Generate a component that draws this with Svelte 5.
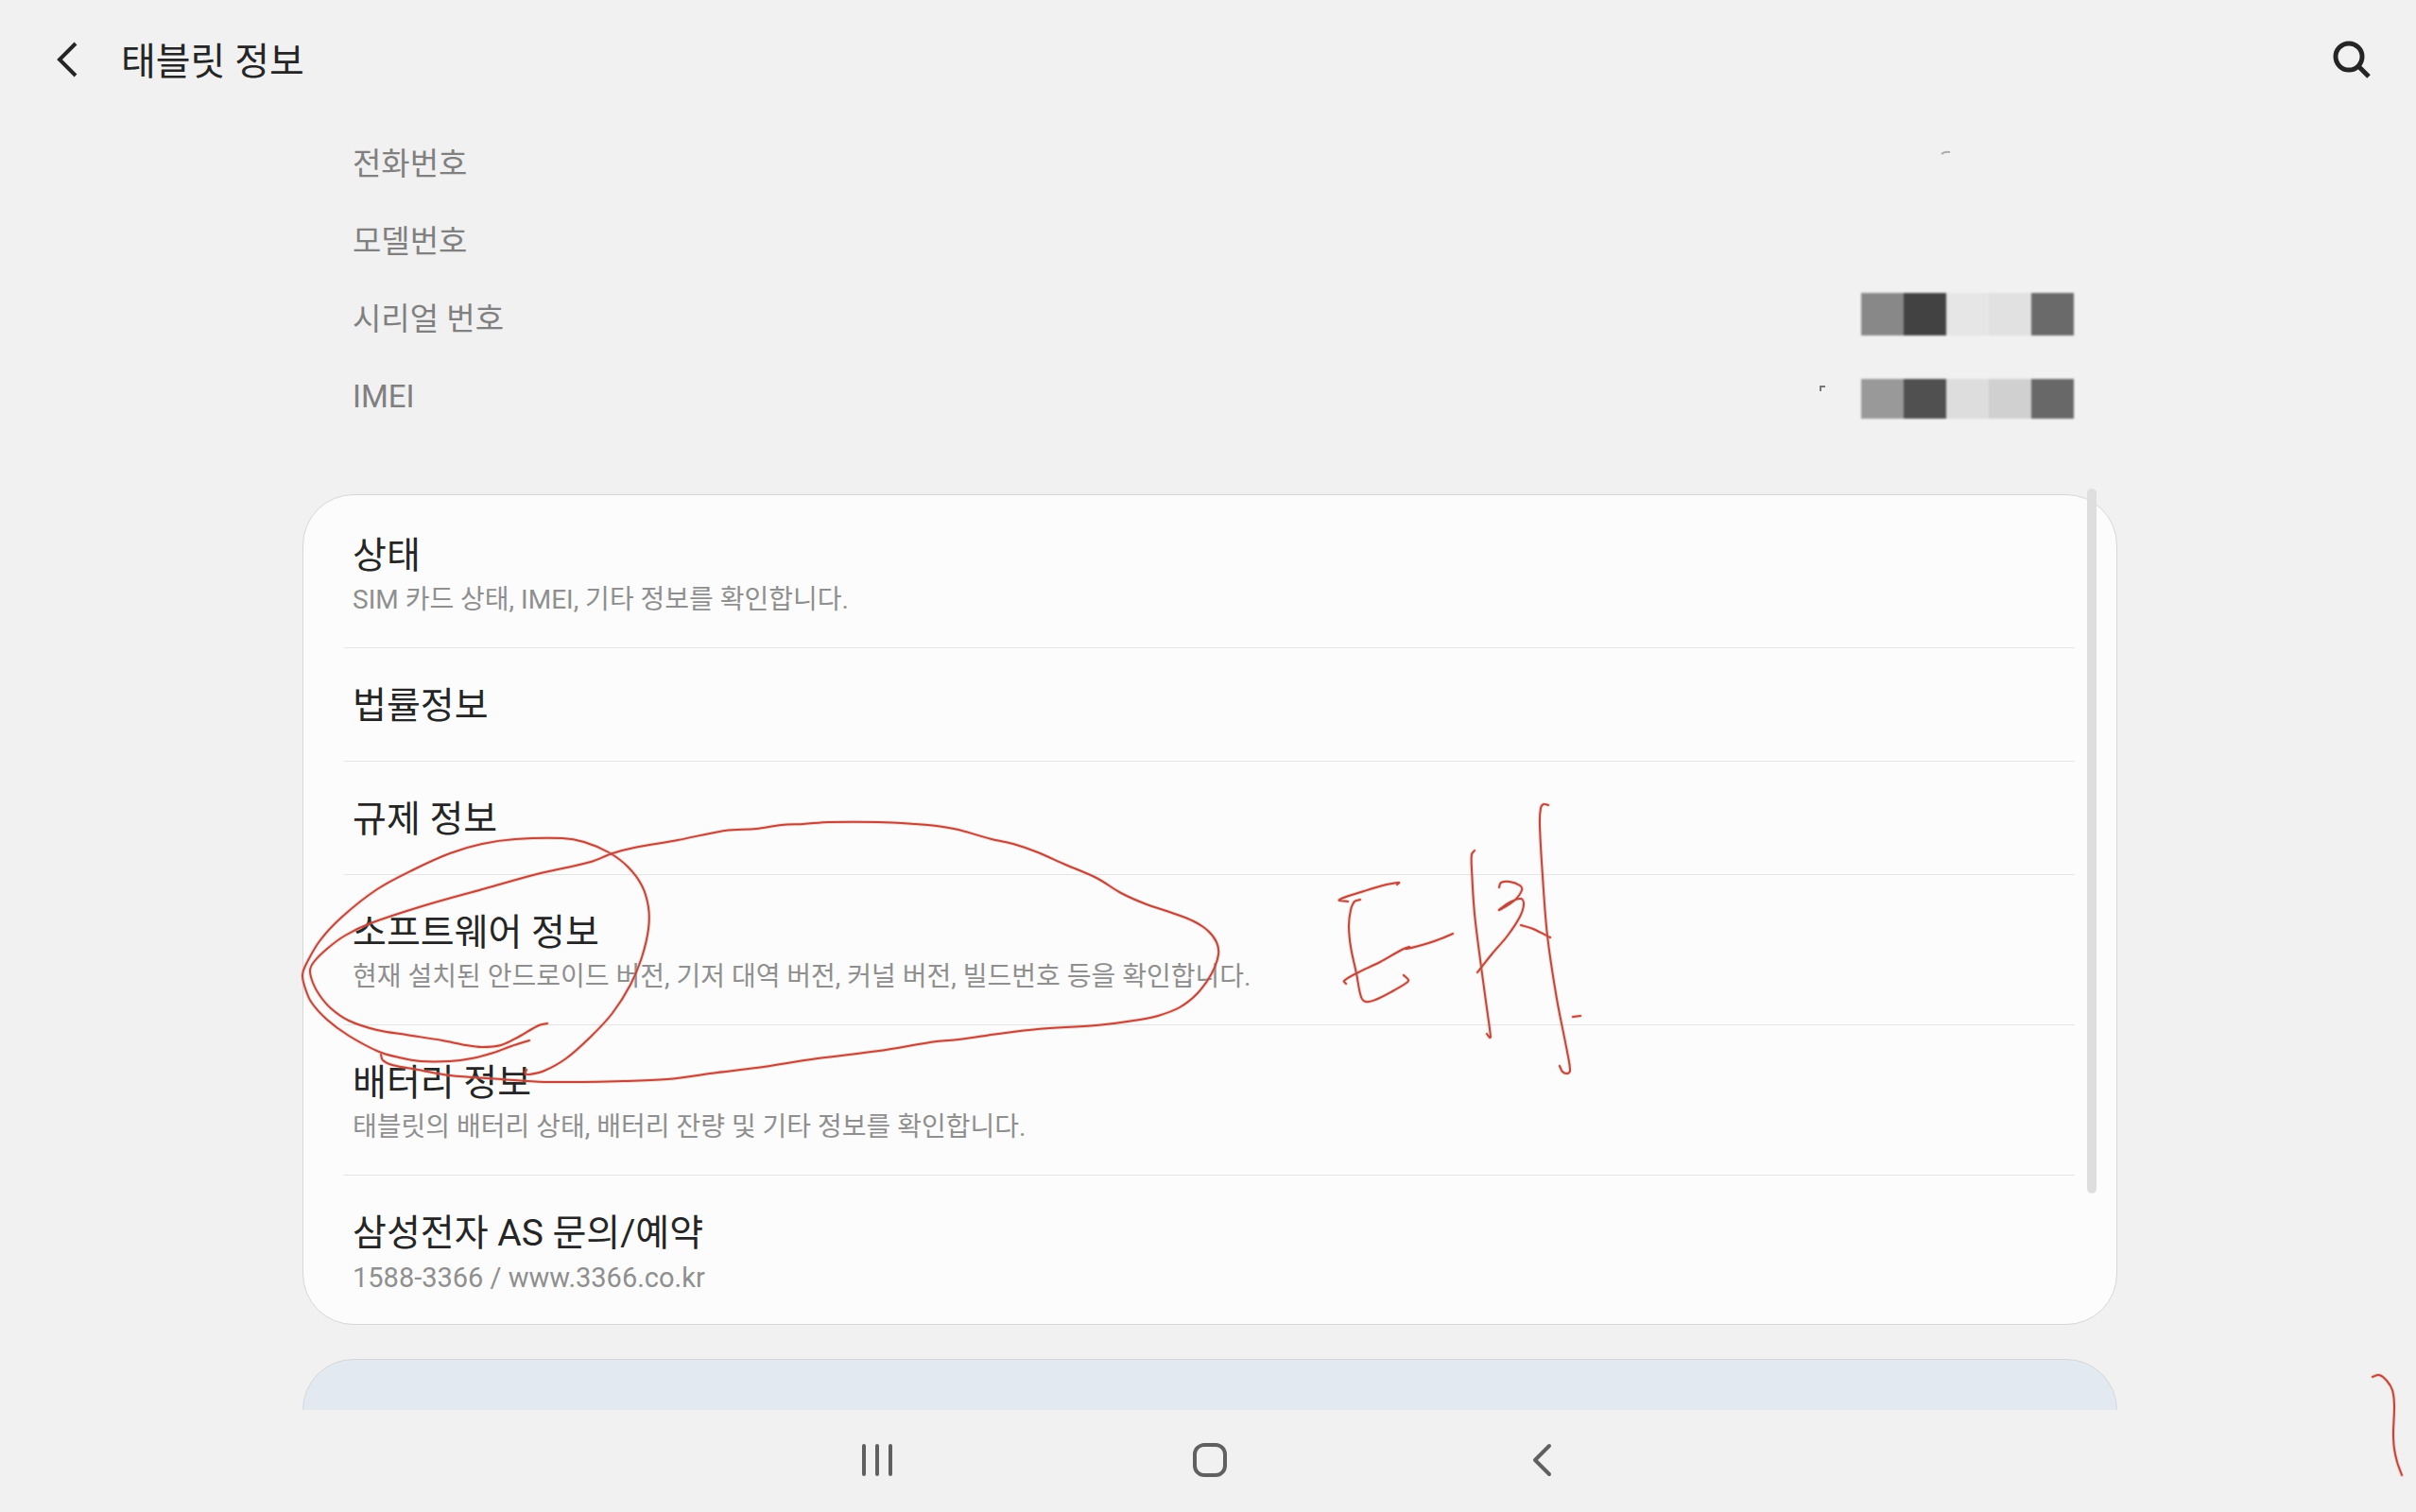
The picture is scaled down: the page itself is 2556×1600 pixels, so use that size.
<script lang="ts">
  type Point = [number, number];

  const deviceInfo = ['전화번호', '모델번호', '시리얼 번호', 'IMEI'];

  const menu = [
    { title: '상태', detail: 'SIM 카드 상태, IMEI, 기타 정보를 확인합니다.' },
    { title: '법률정보' },
    { title: '규제 정보' },
    { title: '소프트웨어 정보', detail: '현재 설치된 안드로이드 버전, 기저 대역 버전, 커널 버전, 빌드번호 등을 확인합니다.' },
    { title: '배터리 정보', detail: '태블릿의 배터리 상태, 배터리 잔량 및 기타 정보를 확인합니다.' },
    { title: '삼성전자 AS 문의/예약', detail: '1588-3366 / www.3366.co.kr', latin: true }
  ];

  const mosaics = [
    { y: 13, h: 45, shades: ['#888888', '#424242', '#e6e6e6', '#e1e1e1', '#6a6a6a'] },
    { y: 104, h: 42, shades: ['#999999', '#505050', '#dddddd', '#d0d0d0', '#686868'] }
  ];

  // Pen strokes drawn over the screen
  const strokes: Point[][] = [
    [[560,1101],[541,1107],[522,1114],[499,1120],[476,1123],[445,1123],[422,1119],[401,1113],[369,1096],[346,1079],[329,1060],[322,1043],[320,1032],[323,1022],[338,996],[361,971],[399,941],[438,920],[476,903],[510,893],[545,888],[595,887],[618,891],[644,902],[664,917],[679,937],[686,960],[686,983],[679,1013],[667,1042],[648,1072],[625,1097],[599,1120],[576,1133],[560,1137],[556,1136],[557,1132]],
    [[579,1083],[570,1085],[549,1097],[530,1106],[510,1108],[493,1106],[468,1101],[430,1095],[399,1090],[369,1080],[350,1067],[338,1053],[331,1040],[328,1027],[332,1018],[346,1004],[365,990],[392,977],[453,957],[514,940],[568,925],[625,912],[648,903],[671,897],[717,889],[767,879],[800,877],[827,873],[850,872],[877,870],[930,870],[968,872],[991,874],[1014,878],[1049,888],[1072,893],[1098,902],[1125,914],[1160,929],[1186,945],[1213,957],[1240,966],[1263,975],[1278,985],[1287,997],[1289,1010],[1282,1030],[1267,1051],[1248,1066],[1225,1075],[1206,1079],[1160,1085],[1098,1089],[1056,1094],[1014,1100],[991,1102],[930,1112],[865,1120],[800,1130],[759,1135],[706,1142],[660,1144],[576,1145],[530,1142],[476,1138],[442,1132],[415,1127],[405,1122],[403,1116]],
    [[1426,954],[1417,952],[1443,943],[1463,937],[1480,934],[1478,936]],
    [[1439,952],[1433,954],[1429,963],[1427,980],[1429,1002],[1435,1030],[1440,1055],[1445,1060],[1455,1058],[1473,1049],[1488,1040],[1490,1037],[1485,1032]],
    [[1424,1041],[1422,1038],[1435,1030],[1460,1018],[1483,1005],[1491,1002],[1487,1004],[1497,1002],[1520,995],[1537,988]],
    [[1560,900],[1557,904],[1557,920],[1560,967],[1567,1023],[1573,1067],[1577,1097],[1576,1098],[1573,1094]],
    [[1586,939],[1588,934],[1597,933],[1608,937],[1610,942],[1602,953],[1586,963],[1597,955],[1609,951],[1612,957],[1608,970],[1595,990],[1578,1010],[1563,1029]],
    [[1609,979],[1622,983],[1640,992]],
    [[1638,852],[1633,851],[1630,855],[1629,873],[1632,927],[1637,990],[1647,1057],[1658,1113],[1661,1133],[1658,1136],[1653,1134],[1650,1128]],
    [[1664,1076],[1672,1075]],
    [[2510,1457],[2517,1455],[2525,1461],[2531,1471],[2533,1487],[2532,1517],[2533,1533],[2536,1547],[2541,1561]]
  ];

  // Smooth curve through every point of a stroke
  function smooth(p: Point[]): string {
    let d = `M${p[0][0]} ${p[0][1]}`;
    for (let i = 0; i < p.length - 1; i++) {
      const a = p[Math.max(i - 1, 0)];
      const b = p[i];
      const c = p[i + 1];
      const e = p[Math.min(i + 2, p.length - 1)];
      const len = Math.hypot(c[0] - b[0], c[1] - b[1]);
      const t1 = len / (3 * (Math.hypot(c[0] - a[0], c[1] - a[1]) || 1));
      const t2 = len / (3 * (Math.hypot(e[0] - b[0], e[1] - b[1]) || 1));
      const k1 = Math.min(t1, 0.3);
      const k2 = Math.min(t2, 0.3);
      d += `C${b[0] + (c[0] - a[0]) * k1} ${b[1] + (c[1] - a[1]) * k1} ${c[0] - (e[0] - b[0]) * k2} ${c[1] - (e[1] - b[1]) * k2} ${c[0]} ${c[1]}`;
    }
    return d;
  }

  const paths = strokes.map(smooth);
</script>

<div class="screen">
  <header>
    <button class="icon" aria-label="뒤로">
      <svg width="40" height="48" viewBox="0 0 40 48" fill="none" stroke="#252525" stroke-width="4"><path d="M30 7 L13 24 L30 41" /></svg>
    </button>
    <h1>태블릿 정보</h1>
    <button class="icon" aria-label="검색">
      <svg width="48" height="48" viewBox="0 0 48 48" fill="none" stroke="#252525" stroke-width="5"><circle cx="23" cy="21" r="14" /><path d="M32.500 30.500 L44 42" /></svg>
    </button>
  </header>

  <main>
    <section class="info">
      <ul>
        {#each deviceInfo as label}
          <li>{label}</li>
        {/each}
      </ul>
      <svg class="mosaic" width="290" height="160" viewBox="0 0 290 160" aria-hidden="true">
        {#each mosaics as row}
          <g class="soft">
            {#each row.shades as shade, i}
              <rect x={59 + i * 45} y={row.y} width="45" height={row.h} fill={shade} />
            {/each}
          </g>
        {/each}
        <path d="M16 117 V112 H21" fill="none" stroke="#777" stroke-width="2" />
      </svg>
      <svg class="speck" width="14" height="6" viewBox="0 0 14 6" aria-hidden="true"><path d="M2 4 Q5 1 11 2" fill="none" stroke="#aaa" stroke-width="2" /></svg>
    </section>

    <ul class="card">
      {#each menu as item}
        <li>
          <button class="row">
            <span class="title">{item.title}</span>
            {#if item.detail}<span class="detail" class:latin={item.latin}>{item.detail}</span>{/if}
          </button>
        </li>
      {/each}
    </ul>
    <div class="card related"></div>
    <div class="scrollbar"></div>
  </main>

  <nav>
    <button aria-label="최근 앱">
      <svg width="48" height="48" viewBox="0 0 48 48" fill="none" stroke="#606060" stroke-width="4" stroke-linecap="round"><path d="M10 9 V39 M24 9 V39 M38 9 V39" /></svg>
    </button>
    <button aria-label="홈">
      <svg width="48" height="48" viewBox="0 0 48 48" fill="none" stroke="#606060" stroke-width="4"><rect x="8" y="8" width="32" height="32" rx="10" /></svg>
    </button>
    <button aria-label="뒤로 가기">
      <svg width="48" height="48" viewBox="0 0 48 48" fill="none" stroke="#606060" stroke-width="4" stroke-linecap="round" stroke-linejoin="round"><path d="M31 9 L16 24 L31 39" /></svg>
    </button>
  </nav>

  <svg class="ink" viewBox="0 0 2556 1600" aria-hidden="true">
    {#each paths as d}
      <path class="halo" {d} />
      <path class="pen" {d} />
    {/each}
  </svg>
</div>

<style>
  :global(body) {
    margin: 0;
    background: #f1f1f1;
  }
  .screen {
    position: relative;
    display: flex;
    flex-direction: column;
    height: 100vh;
    overflow: hidden;
    background: #f1f1f1;
    color: #252525;
    font-family: Roboto, 'Noto Sans CJK KR', sans-serif;
  }
  button {
    padding: 0;
    border: 0;
    background: none;
    color: inherit;
    font: inherit;
  }
  ul {
    margin: 0;
    padding: 0;
    list-style: none;
  }
  svg {
    display: block;
  }
  header {
    display: flex;
    align-items: center;
    flex: none;
    height: 126px;
    padding: 0 46px 0 50px;
  }
  h1 {
    flex: 1;
    margin: 0 0 0 38px;
    padding-top: 5px;
    font-size: 40px;
    line-height: 56px;
    font-weight: 400;
  }
  main {
    position: relative;
    flex: 1;
    min-height: 0;
    overflow: hidden;
    padding: 7px 316px 0 320px;
  }
  .info {
    position: relative;
    margin-bottom: 62px;
    padding-left: 53px;
    color: #808080;
    font-size: 33px;
    line-height: 82px;
  }
  .mosaic {
    position: absolute;
    right: 40px;
    top: 164px;
  }
  .speck {
    position: absolute;
    right: 174px;
    top: 26px;
  }
  .soft {
    filter: blur(1px);
  }
  .card {
    border: 1px solid #d6d6d6;
    border-radius: 54px;
    background: #fcfcfc;
    padding: 3px 44px 0 43px;
  }
  .card li + li {
    border-top: 1px solid #e4e4e4;
  }
  .row {
    display: flex;
    flex-direction: column;
    width: 100%;
    padding: 37px 9px 34px;
    text-align: left;
  }
  .row:has(.detail) {
    padding-bottom: 27px;
  }
  .card li:last-child .row {
    padding-bottom: 26px;
  }
  .title {
    font-size: 39px;
    line-height: 48px;
  }
  .detail {
    color: #8f8f8f;
    font-size: 28px;
    line-height: 46px;
  }
  .latin {
    font-size: 29px;
  }
  .related {
    height: 200px;
    margin-top: 36px;
    background: #e2e9f0;
  }
  .scrollbar {
    position: absolute;
    top: 391px;
    right: 338px;
    width: 10px;
    height: 746px;
    border-radius: 5px;
    background: #dedede;
  }
  nav {
    display: flex;
    justify-content: center;
    align-items: center;
    gap: 304px;
    flex: none;
    height: 106px;
    padding: 0 0 2px 4px;
  }
  .ink {
    position: absolute;
    inset: 0;
    width: 100%;
    height: 100%;
    pointer-events: none;
    fill: none;
    stroke-linecap: round;
    stroke-linejoin: round;
  }
  .halo {
    stroke: #f58a78;
    stroke-opacity: 0.3;
    stroke-width: 4;
  }
  .pen {
    stroke: #bc483e;
    stroke-width: 2;
  }
</style>
